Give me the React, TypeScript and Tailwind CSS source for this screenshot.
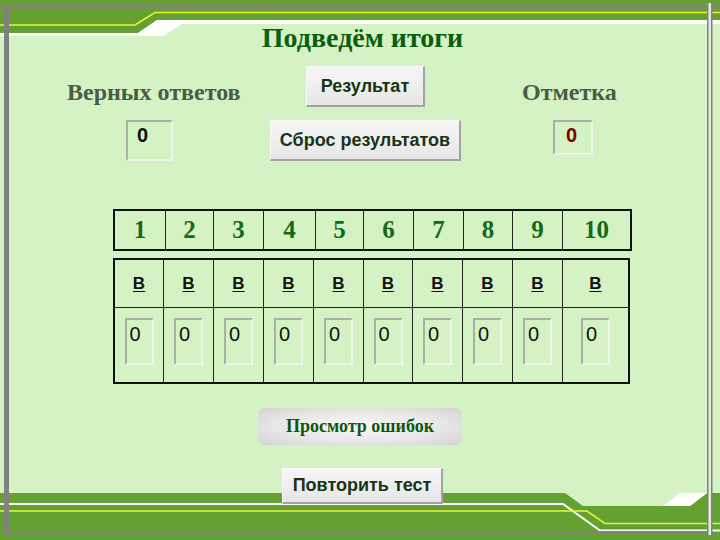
import React from "react";

const G = "#64a132";

function Frame() {
  return (
    <svg className="absolute inset-0" width="720" height="540" viewBox="0 0 720 540">
      <rect width="720" height="540" fill="#d5f2c5" />
      {/* top band */}
      <polygon points="0,0 720,0 720,20 157,20 138,33 0,33" fill={G} />
      <polygon points="0,33 138,33 157,20 720,20 720,24 182,24 163,36 0,36" fill="#ffffff" />
      <rect x="0" y="3" width="720" height="7" fill="#7a8f5e" />
      <polyline points="0,25 135,25 155,12.5 720,12.5" stroke="#e6f53c" strokeWidth="1.6" fill="none" />
      {/* bottom band */}
      <polygon points="0,493 565,493 583,506 690,506 707,493 720,493 720,540 0,540" fill={G} />
      <polygon points="680,493 707,493 690,506 663,506" fill="#ffffff" />
      <polyline points="0,504 563,504 600,530.5 720,530.5" stroke="#ffffff" strokeWidth="2" fill="none" />
      <polyline points="0,511 587,511 605,523.5 720,523.5" stroke="#e6f53c" strokeWidth="1.6" fill="none" />
      <rect x="4" y="531" width="709" height="3" fill="#808080" />
      <rect x="4" y="9" width="5" height="525" fill="#808080" />
      {/* right double rule */}
      <rect x="707" y="3" width="5" height="532" fill="#e4ece0" />
      <rect x="707" y="3" width="1.5" height="532" fill="#808080" />
      <rect x="711" y="3" width="1.5" height="532" fill="#808080" />
    </svg>
  );
}

const sans = "font-['Liberation_Sans',Arial,sans-serif]";
const serif = "font-['Liberation_Serif','Times_New_Roman',serif]";

function WinButton({ label, w }: { label: string; w: string }) {
  return (
    <div
      className={`${w} h-[41px] flex items-center justify-center bg-gradient-to-b from-[#f6f6f6] to-[#e6e6e6] border-t border-l border-[#fafafa] border-r-2 border-b-2 border-r-[#a3a3a3] border-b-[#a3a3a3] ${sans} font-bold text-[18px] text-[#153515]`}
    >
      {label}
    </div>
  );
}

const topCols = ["w-[50px]", "w-[48px]", "w-[50px]", "w-[52px]", "w-[48px]", "w-[50px]", "w-[50px]", "w-[49px]", "w-[50px]", "w-[68px]"];
const botCols = ["w-[48px]", "w-[50px]", "w-[50px]", "w-[50px]", "w-[50px]", "w-[49px]", "w-[50px]", "w-[50px]", "w-[50px]", "w-[66px]"];

export default function App() {
  return (
    <div className="relative w-[720px] h-[540px] overflow-hidden">
      <Frame />
      <div className="relative flex flex-col">
        {/* title */}
        <div className={`pt-[22px] pl-[5px] h-[53px] text-center ${serif} font-bold text-[28px] leading-[32px] text-[#0c5e0c]`}>
          Подведём итоги
        </div>

        {/* labels and result button */}
        <div className="mt-[13px] flex items-start">
          <div className={`ml-[67px] w-[239px] pt-[12px] ${serif} font-bold text-[24px] leading-[28px] text-[#4a5b46]`}>
            Верных ответов
          </div>
          <WinButton label="Результат" w="w-[119px]" />
          <div className={`ml-[97px] pt-[12px] ${serif} font-bold text-[24px] leading-[28px] text-[#4a5b46]`}>
            Отметка
          </div>
        </div>

        {/* score boxes and reset */}
        <div className="mt-[13px] flex items-start">
          <div className={`ml-[126px] w-[47px] h-[41px] border-2 border-t-[#a9b0a6] border-l-[#a9b0a6] border-r-[#eef5ea] border-b-[#eef5ea] pl-[9px] pt-[1px] ${sans} font-bold text-[20px] leading-[24px] text-[#111]`}>
            0
          </div>
          <div className="ml-[97px]">
            <WinButton label="Сброс результатов" w="w-[191px]" />
          </div>
          <div className={`ml-[92px] w-[40px] h-[35px] border-2 border-t-[#a9b0a6] border-l-[#a9b0a6] border-r-[#eef5ea] border-b-[#eef5ea] pl-[11px] pt-[1px] ${sans} font-bold text-[20px] leading-[24px] text-[#7f0000]`}>
            0
          </div>
        </div>

        {/* question numbers */}
        <div className="mt-[48px] ml-[113px] flex w-fit border-2 border-[#111] h-[42px]">
          {topCols.map((w, i) => (
            <div
              key={i}
              className={`${w} ${i > 0 ? "border-l border-[#222]" : ""} flex items-center justify-center ${serif} font-bold text-[25px] text-[#166a16]`}
            >
              {i + 1}
            </div>
          ))}
        </div>

        {/* answers */}
        <div className="mt-[7px] ml-[113px] flex w-fit border-2 border-[#111] h-[126px]">
          {botCols.map((w, i) => (
            <div key={i} className={`${w} ${i > 0 ? "border-l border-[#222]" : ""} flex flex-col`}>
              <div className={`h-[48px] border-b border-[#222] flex items-center justify-center ${sans} font-bold text-[17px] text-[#111] underline underline-offset-2`}>
                В
              </div>
              <div className="flex-1 flex justify-center pt-[10px]">
                <div className={`w-[29px] h-[47px] border-2 border-t-[#a9b0a6] border-l-[#a9b0a6] border-r-[#eef5ea] border-b-[#eef5ea] pl-[3px] pt-[2px] ${sans} text-[20px] leading-[24px] text-[#111]`}>
                  0
                </div>
              </div>
            </div>
          ))}
        </div>

        {/* review errors */}
        <div className="mt-[24px] ml-[258px] w-[204px] h-[37px] rounded-[7px] flex items-center justify-center bg-[radial-gradient(ellipse_at_center,#f8f8f8_0%,#e6e6e6_60%,#d2d2d2_100%)]">
          <span className={`${serif} font-bold text-[18px] text-[#0f570f]`}>Просмотр ошибок</span>
        </div>

        {/* retry */}
        <div className="mt-[23px] ml-[282px]">
          <WinButton label="Повторить тест" w="w-[161px] !h-[36px]" />
        </div>
      </div>
    </div>
  );
}
